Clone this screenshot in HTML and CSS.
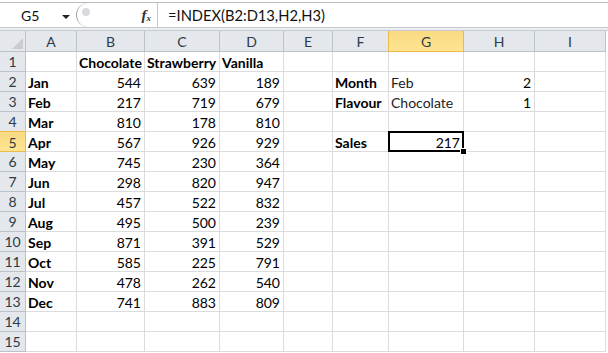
FILE: index.html
```html
<!DOCTYPE html>
<html lang="en">
  <head>
    <meta charset="UTF-8" />
    <meta name="viewport" content="width=device-width, initial-scale=1.0" />
    <title>INDEX lookup</title>
    <link rel="stylesheet" href="styles.css">
  </head>
  <body>
    <div class="formula-bar">
      <div class="name-box">
        <span class="name">G5</span>
        <span class="arrow"></span>
      </div>
      <div class="tools">
        <span class="knob"></span>
        <span class="fx"><i>f</i><sub>x</sub></span>
      </div>
      <div class="formula">=INDEX(B2:D13,H2,H3)</div>
    </div>
    <div class="bar-gap"></div>

    <div class="sheet" id="sheet"></div>

    <script>
      const cols = ["A", "B", "C", "D", "E", "F", "G", "H", "I"];
      const months = ["Jan", "Feb", "Mar", "Apr", "May", "Jun", "Jul", "Aug", "Sep", "Oct", "Nov", "Dec"];
      const chocolate = [544, 217, 810, 567, 745, 298, 457, 495, 871, 585, 478, 741];
      const strawberry = [639, 719, 178, 926, 230, 820, 522, 500, 391, 225, 262, 883];
      const vanilla = [189, 679, 810, 929, 364, 947, 832, 239, 529, 791, 540, 809];

      // row -> { col: [text, kind] }
      let cells = {
        1: { B: ["Chocolate", "bold"], C: ["Strawberry", "bold"], D: ["Vanilla", "bold"] },
        2: { F: ["Month", "bold"], G: ["Feb", "text"], H: [2, "num"] },
        3: { F: ["Flavour", "bold"], G: ["Chocolate", "text"], H: [1, "num"] },
        5: { F: ["Sales", "bold"], G: [217, "num active"] },
      };
      months.forEach((m, i) => {
        let r = i + 2;
        cells[r] = cells[r] || {};
        cells[r].A = [m, "bold"];
        cells[r].B = [chocolate[i], "num"];
        cells[r].C = [strawberry[i], "num"];
        cells[r].D = [vanilla[i], "num"];
      });

      let sheet = document.getElementById("sheet");
      let html = `<div class="hd corner"><span class="tri"></span></div>`;
      cols.forEach((c) => {
        html += `<div class="hd col${c === "G" ? " sel" : ""}">${c}</div>`;
      });
      for (let r = 1; r <= 15; r++) {
        html += `<div class="hd row${r === 5 ? " sel" : ""}">${r}</div>`;
        cols.forEach((c) => {
          let cell = cells[r] && cells[r][c];
          if (cell) {
            html += `<div class="cell ${cell[1]}">${cell[0]}</div>`;
          } else {
            html += `<div class="cell"></div>`;
          }
        });
      }
      sheet.innerHTML = html;
    </script>
  </body>
</html>
```

FILE: styles.css
```css
body {
  margin: 0;
  background: #fff;
  font-family: Lato, "Liberation Sans", sans-serif;
  font-size: 14px;
  color: #000;
}

.formula-bar {
  display: flex;
  margin-top: 2px;
  height: 24px;
  border-top: 1px solid #b9bcc1;
  border-bottom: 1px solid #c6c9cd;
  background: #fff;
}

.name-box {
  width: 76px;
  display: flex;
  align-items: center;
  position: relative;
}

.name {
  margin-left: 21px;
  color: #111;
}

.arrow {
  position: absolute;
  left: 62px;
  top: 12px;
  border-left: 4px solid transparent;
  border-right: 4px solid transparent;
  border-top: 4px solid #222;
}

.tools {
  width: 80px;
  border-left: 1px solid #9ea3a9;
  border-radius: 14px 0 0 14px;
  position: relative;
  display: flex;
  align-items: center;
  justify-content: flex-end;
}

.knob {
  position: absolute;
  left: 5px;
  top: 5px;
  width: 8px;
  height: 8px;
  border-radius: 50%;
  background: #d8dadd;
}

.fx {
  font-family: "Liberation Serif", serif;
  font-size: 15px;
  font-weight: bold;
  color: #333;
  margin-right: 6px;
}

.fx sub {
  font-size: 9px;
  font-style: italic;
  vertical-align: -1px;
}

.formula {
  flex: 1;
  border-left: 1px solid #c3c7cc;
  padding-left: 10px;
  line-height: 24px;
  font-size: 14.7px;
  color: #111;
}

.bar-gap {
  height: 2px;
  background: #eceef1;
  border-bottom: 1px solid #c6c9cd;
}

.sheet {
  display: grid;
  grid-template-columns: 26px 51px 68px 75px 64px 49px 56px 75px 71px 71px;
  grid-template-rows: 21px;
  grid-auto-rows: 20px;
  width: 606px;
}

.hd {
  box-sizing: border-box;
  background: #e4e7eb;
  border-right: 1px solid #bcc2c9;
  border-bottom: 1px solid #bcc2c9;
  color: #2e3a47;
  text-align: center;
  line-height: 20px;
}

.hd.col {
  line-height: 21px;
}

.hd.sel {
  background: linear-gradient(#f9d982, #fee592);
  border-color: #f0b94c;
}

.hd.col.sel {
  border-left: 1px solid #f0b94c;
  margin-left: -1px;
}

.hd.row.sel {
  border-top: 1px solid #f0b94c;
  margin-top: -1px;
  line-height: 21px;
}

.corner {
  position: relative;
}

.tri {
  position: absolute;
  right: 2px;
  bottom: 2px;
  border-left: 11px solid transparent;
  border-bottom: 11px solid #c9cdd2;
}

.cell {
  box-sizing: border-box;
  border-right: 1px solid #dadcdd;
  border-bottom: 1px solid #dadcdd;
  line-height: 21px;
  padding: 0 2px;
  white-space: nowrap;
  overflow: visible;
}

.bold {
  font-weight: bold;
}

.text {
  color: #222;
}

.num {
  text-align: right;
  padding-right: 3px;
}

.active {
  position: relative;
}

.active::before {
  content: "";
  position: absolute;
  left: -1px;
  top: -1px;
  right: -1px;
  bottom: -1px;
  border: 2px solid #000;
}

.active::after {
  content: "";
  position: absolute;
  right: -4px;
  bottom: -4px;
  width: 5px;
  height: 5px;
  background: #000;
  border: 1px solid #fff;
}
```
